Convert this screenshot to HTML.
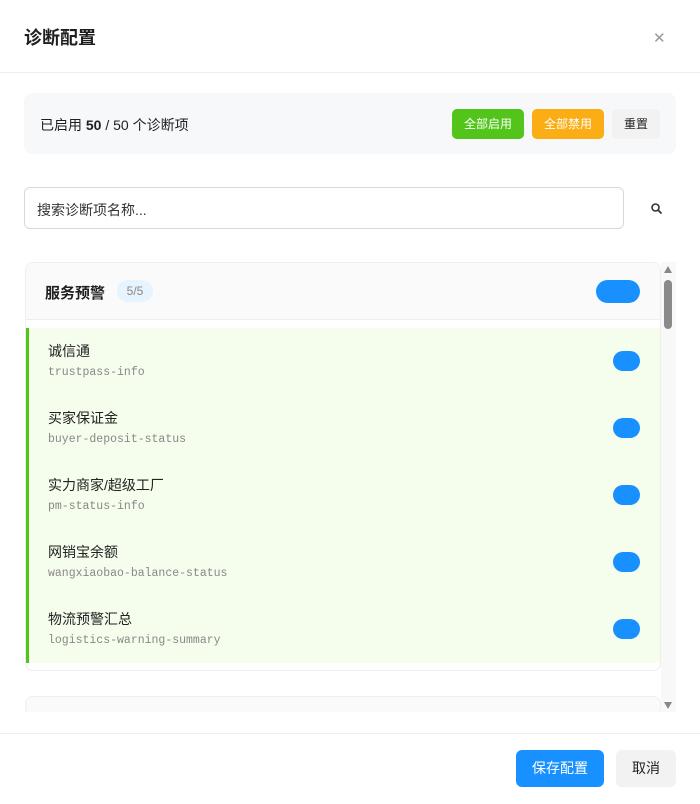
<!DOCTYPE html>
<html><head><meta charset="utf-8"><style>
*{box-sizing:border-box;margin:0;padding:0}
body{width:700px;height:804px;background:#fff;font-family:"Liberation Sans","Noto Sans CJK SC",sans-serif;color:#1f1f1f;position:relative;overflow:hidden}
.abs{position:absolute}
.title{left:24px;top:27px;font-size:18px;font-weight:bold;color:#1f1f1f;line-height:22px}
.close{left:653px;top:29px;font-size:15px;color:#999}
.hr{left:0;width:700px;height:1px;background:#eee}
.stats{left:24px;top:93px;width:652px;height:61px;background:#f7f8fa;border-radius:8px}
.btn{position:absolute;height:30px;top:109px;border-radius:5px;font-size:12px;line-height:30px;text-align:center;color:#fff}
.search{left:24px;top:187px;width:600px;height:42px;border:1px solid #d9d9d9;border-radius:6px;font-size:14px;color:#333;padding:12px 12px}
.card{left:25px;top:262px;width:636px;height:409px;border:1px solid #eee;border-radius:8px;overflow:hidden;background:#fff}
.gh{height:57px;background:#fafafa;border-bottom:1px solid #eee;position:relative}
.items{position:absolute;left:0;top:65px;width:636px;height:335px;background:#f5fdec;border-left:3px solid #52c41a}
.item{height:67px;position:relative}
.item .n{position:absolute;left:19px;top:13px;font-size:14px;color:#222}
.item .c{position:absolute;left:19px;top:38px;font-size:11.5px;color:#888;font-family:"Liberation Mono",monospace}
.tg{position:absolute;left:584px;top:23px;width:27px;height:20px;border-radius:10px;background:#1890ff}
</style></head><body>
<div class="abs title">诊断配置</div>
<div class="abs close">✕</div>
<div class="abs hr" style="top:72px"></div>
<div class="abs stats"><div style="position:absolute;left:16px;top:22px;font-size:14px">已启用 <b>50</b> / 50 个诊断项</div></div>
<div class="btn" style="left:452px;width:72px;background:#52c41a">全部启用</div>
<div class="btn" style="left:532px;width:72px;background:#faad14">全部禁用</div>
<div class="btn" style="left:612px;width:48px;background:#f2f2f2;color:#222">重置</div>
<div class="abs search">搜索诊断项名称...</div>
<svg class="abs" style="left:650px;top:202px" width="14" height="14" viewBox="0 0 14 14"><circle cx="5.5" cy="5.5" r="3.5" fill="none" stroke="#333" stroke-width="1.6"/><path d="M8 8l3.5 3.5" stroke="#333" stroke-width="1.8"/></svg>
<div class="abs card">
 <div class="gh"><span style="position:absolute;left:19px;top:19px;font-size:15px;font-weight:bold">服务预警</span>
 <span style="position:absolute;left:91px;top:17px;width:36px;height:22px;border-radius:11px;background:#e6f4ff;color:#888;font-size:12px;line-height:22px;text-align:center">5/5</span>
 <span style="position:absolute;left:570px;top:17px;width:44px;height:23px;border-radius:12px;background:#1890ff"></span></div>
 <div class="items">
  <div class="item"><div class="n">诚信通</div><div class="c">trustpass-info</div><div class="tg"></div></div>
  <div class="item"><div class="n">买家保证金</div><div class="c">buyer-deposit-status</div><div class="tg"></div></div>
  <div class="item"><div class="n">实力商家/超级工厂</div><div class="c">pm-status-info</div><div class="tg"></div></div>
  <div class="item"><div class="n">网销宝余额</div><div class="c">wangxiaobao-balance-status</div><div class="tg"></div></div>
  <div class="item"><div class="n">物流预警汇总</div><div class="c">logistics-warning-summary</div><div class="tg"></div></div>
 </div>
</div>
<div class="abs" style="left:25px;top:696px;width:636px;height:20px;border:1px solid #eee;border-radius:8px;background:#fafafa"></div>
<div class="abs" style="left:0;top:712px;width:700px;height:21px;background:#fff"></div>
<div class="abs" style="left:661px;top:262px;width:15px;height:450px;background:#f8f8f8"></div>
<div class="abs" style="left:664px;top:266px;width:0;height:0;border-left:4px solid transparent;border-right:4px solid transparent;border-bottom:7px solid #888"></div>
<div class="abs" style="left:664px;top:280px;width:8px;height:49px;border-radius:4px;background:#8a8a8a"></div>
<div class="abs" style="left:664px;top:702px;width:0;height:0;border-left:4px solid transparent;border-right:4px solid transparent;border-top:7px solid #888"></div>
<div class="abs hr" style="top:733px"></div>
<div class="abs" style="left:516px;top:750px;width:88px;height:37px;border-radius:6px;background:#1890ff;color:#fff;font-size:14px;line-height:37px;text-align:center">保存配置</div>
<div class="abs" style="left:616px;top:750px;width:60px;height:37px;border-radius:6px;background:#f2f2f2;color:#222;font-size:14px;line-height:37px;text-align:center">取消</div>
</body></html>
